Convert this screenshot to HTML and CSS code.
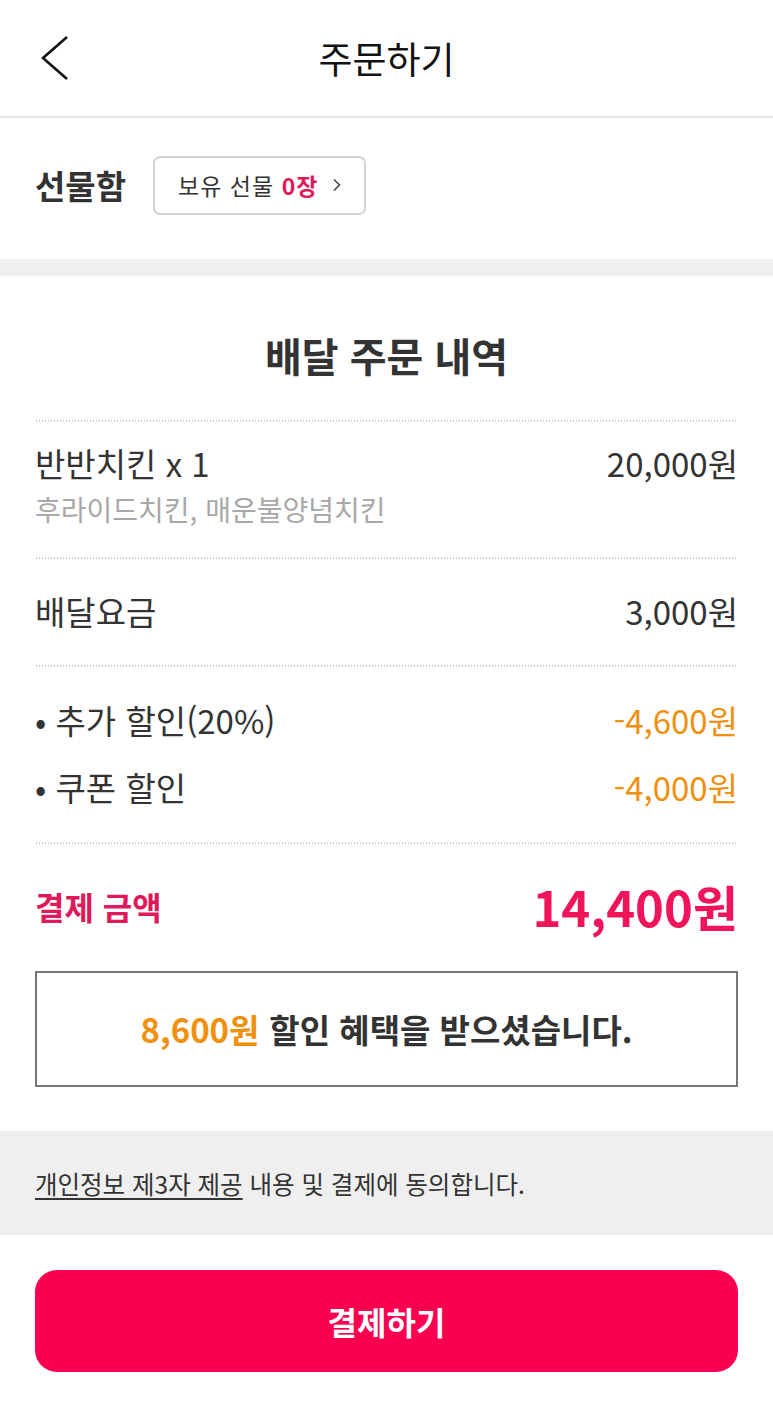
FILE: index.html
```html
<!DOCTYPE html>
<html lang="ko">
<head>
    <meta charset="UTF-8">
    <meta name="viewport" content="width=device-width, initial-scale=1.0">
    <title>주문하기</title>
    <link rel="stylesheet" href="styles.css">
</head>
<body>
    <header class="topbar">
        <a class="back" href="#" aria-label="뒤로">
            <svg width="30" height="46" viewBox="0 0 30 46"><path d="M27 2 L3 23 L27 44" fill="none" stroke="#111" stroke-width="2.6" stroke-linejoin="miter"/></svg>
        </a>
        <h1>주문하기</h1>
        <span></span>
    </header>

    <section class="gift">
        <span class="gift-label">선물함</span>
        <button class="gift-btn" type="button">
            <span>보유 선물 <b>0장</b></span>
            <svg width="10" height="14" viewBox="0 0 10 14"><path d="M2 1.5 L7.5 7 L2 12.5" fill="none" stroke="#444" stroke-width="1.6"/></svg>
        </button>
    </section>

    <div class="band"></div>

    <section class="order">
        <h2>배달 주문 내역</h2>
        <div class="dots"></div>

        <div class="item">
            <div class="row">
                <span>반반치킨 x 1</span>
                <span>20,000원</span>
            </div>
            <div class="sub">후라이드치킨, 매운불양념치킨</div>
        </div>
        <div class="dots"></div>

        <div class="row fee">
            <span>배달요금</span>
            <span>3,000원</span>
        </div>
        <div class="dots"></div>

        <div class="discounts">
            <div class="row">
                <span>• 추가 할인(20%)</span>
                <span class="minus">-4,600원</span>
            </div>
            <div class="row">
                <span>• 쿠폰 할인</span>
                <span class="minus">-4,000원</span>
            </div>
        </div>
        <div class="dots"></div>

        <div class="row total">
            <span class="total-label">결제 금액</span>
            <span class="total-price">14,400원</span>
        </div>

        <div class="saved">
            <span class="saved-amount">8,600원</span> 할인 혜택을 받으셨습니다.
        </div>
    </section>

    <section class="agree">
        <p><a href="#">개인정보 제3자 제공</a> 내용 및 결제에 동의합니다.</p>
    </section>

    <div class="pay-wrap">
        <button class="pay" type="button">결제하기</button>
    </div>
</body>
</html>
```

FILE: styles.css
```css
body {
    margin: 0;
    font-family: "Noto Sans CJK KR", "Noto Sans", sans-serif;
    background-color: #fff;
    color: #333;
}
.topbar {
    height: 116px;
    display: grid;
    grid-template-columns: 1fr auto 1fr;
    align-items: center;
    border-bottom: 2px solid #e6e6e6;
}
.back {
    display: flex;
    padding-left: 40px;
}
.topbar h1 {
    margin: 0;
    font-size: 37px;
    line-height: 48px;
    font-weight: 400;
    color: #111;
}
.gift {
    height: 134px;
    padding: 0 35px 7px;
    display: flex;
    align-items: center;
    gap: 27px;
}
.gift-label {
    font-size: 33px;
    font-weight: 700;
    color: #333;
}
.gift-btn {
    height: 59px;
    padding: 0 22px 0 23px;
    display: flex;
    align-items: center;
    gap: 14px;
    font-family: inherit;
    font-size: 23px;
    letter-spacing: 1px;
    color: #333;
    background-color: #fff;
    border: 2px solid #d2d2d2;
    border-radius: 7px;
}
.gift-btn b {
    color: #e0195a;
}
.band {
    height: 17px;
    background-color: #f0f0f0;
}
.order {
    padding: 55px 35px 0;
}
.order h2 {
    margin: 0 0 41px;
    font-size: 40px;
    line-height: 48px;
    font-weight: 700;
    text-align: center;
    color: #333;
}
.dots {
    height: 2px;
    margin: 0 1px;
    background-image: repeating-linear-gradient(to right, #c8c8c8 0 1px, transparent 1px 3px);
}
.row {
    display: flex;
    justify-content: space-between;
    align-items: center;
    font-size: 33px;
    line-height: 40px;
}
.item {
    padding: 21px 0 31px;
}
.sub {
    margin-top: 9px;
    font-size: 28px;
    line-height: 34px;
    color: #a8a8a8;
}
.fee {
    padding: 32px 0 34px;
}
.discounts {
    display: flex;
    flex-direction: column;
    gap: 27px;
    padding: 33px 0 35px;
}
.minus {
    color: #f0900f;
}
.total {
    padding: 32px 0 35px;
    line-height: 60px;
}
.total-label {
    font-size: 32px;
    font-weight: 700;
    color: #e0195a;
}
.total-price {
    font-size: 49px;
    font-weight: 700;
    color: #f0145a;
}
.saved {
    height: 112px;
    display: flex;
    align-items: center;
    justify-content: center;
    gap: 0.3em;
    border: 2px solid #777;
    font-size: 33px;
    font-weight: 700;
    color: #333;
}
.saved-amount {
    color: #f0900f;
}
.agree {
    margin-top: 44px;
    height: 104px;
    display: flex;
    align-items: center;
    padding: 0 35px;
    background-color: #efefef;
}
.agree p {
    margin: 0;
    font-size: 24.5px;
    color: #333;
}
.agree a {
    color: #333;
    text-decoration: underline;
    text-underline-offset: 4px;
}
.pay-wrap {
    padding: 35px 35px 55px;
}
.pay {
    width: 100%;
    height: 102px;
    border: none;
    border-radius: 22px;
    background-color: #fa0050;
    color: #fff;
    font-family: inherit;
    font-size: 32px;
    font-weight: 700;
    cursor: pointer;
}
```
